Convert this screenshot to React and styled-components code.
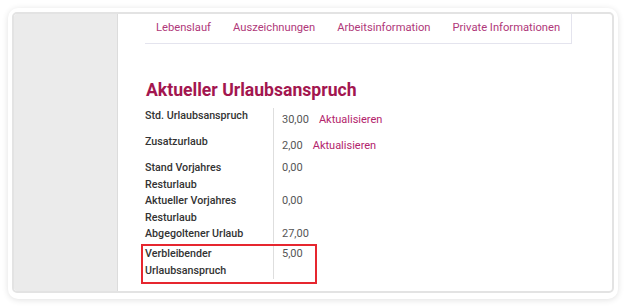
import styled, { createGlobalStyle } from "styled-components";

const GlobalStyle = createGlobalStyle`
  body {
    margin: 0;
    background: #ffffff;
    font-family: Roboto, "Liberation Sans", Arial, sans-serif;
  }
`;

const tabs = ["Lebenslauf", "Auszeichnungen", "Arbeitsinformation", "Private Informationen"];

const rows = [
  { label: "Std. Urlaubsanspruch", value: "30,00", action: true },
  { label: "Zusatzurlaub", value: "2,00", action: true },
  { label: "Stand Vorjahres Resturlaub", value: "0,00" },
  { label: "Aktueller Vorjahres Resturlaub", value: "0,00" },
  { label: "Abgegoltener Urlaub", value: "27,00" },
];

function App() {
  return (
    <>
      <GlobalStyle />
      <StPage>
        <StCard>
          <StFrame>
            {/* linke graue Spalte */}
            <StSidebar />

            <StContent>
              <StTabBar>
                {tabs.map((t) => (
                  <StTab key={t}>{t}</StTab>
                ))}
              </StTabBar>

              <StHeading>Aktueller Urlaubsanspruch</StHeading>

              <StTable>
                {rows.map((r) => (
                  <StRow key={r.label}>
                    <StLabel>{r.label}</StLabel>
                    <StValue $action={r.action}>
                      {r.value}
                      {r.action && <StLink type="button">Aktualisieren</StLink>}
                    </StValue>
                  </StRow>
                ))}

                {/* markierte Zeile */}
                <StHighlight>
                  <StRow>
                    <StLabel>Verbleibender Urlaubsanspruch</StLabel>
                    <StValue>5,00</StValue>
                  </StRow>
                </StHighlight>
              </StTable>
            </StContent>
          </StFrame>
        </StCard>
      </StPage>
    </>
  );
}

export default App;

const StPage = styled.div`
  padding: 8px;
`;

const StCard = styled.div`
  width: 610px;
  box-sizing: border-box;
  padding: 4px 4px 6px 4px;
  background: #fff;
  border-radius: 10px;
  box-shadow: 0 1px 6px rgba(0, 0, 0, 0.12);
`;

const StFrame = styled.div`
  display: flex;
  border: 2px solid #e3e3e3;
  border-radius: 5px;
  overflow: hidden;
  background: #fff;
`;

const StSidebar = styled.div`
  width: 103px;
  flex-shrink: 0;
  background: #ebebeb;
  border-right: 1px solid #dcdcdc;
`;

const StContent = styled.div`
  flex: 1;
  padding: 0 0 7px 27px;
`;

const StTabBar = styled.div`
  display: flex;
  width: 426px;
  height: 27px;
  padding-bottom: 2px;
  align-items: center;
  border-bottom: 1px solid #e4e4ee;
  border-right: 1px solid #e4e4ee;
`;

const StTab = styled.div`
  padding: 0 11px;
  font-size: 11.2px;
  color: #b0387a;
  white-space: nowrap;
`;

const StHeading = styled.h2`
  margin: 36px 0 8px 1px;
  font-size: 17.6px;
  line-height: 20px;
  font-weight: 700;
  color: #a3164f;
`;

const StTable = styled.div`
  display: flex;
  flex-direction: column;
`;

const StRow = styled.div`
  display: flex;
  font-size: 11px;
  line-height: 16.5px;
`;

const StLabel = styled.div`
  width: 128px;
  box-sizing: border-box;
  padding-right: 8px;
  font-size: 10.7px;
  font-weight: 500;
  color: #333;
`;

const StValue = styled.div`
  border-left: 1px solid #dedede;
  padding: ${(p) => (p.$action ? "4px 0 5.5px 8px" : "0 0 0 8px")};
  color: #555;
  white-space: nowrap;
`;

const StLink = styled.button`
  margin-left: 10px;
  padding: 0;
  border: none;
  background: none;
  font-family: inherit;
  font-size: 11px;
  line-height: 16.5px;
  color: #b3236b;
  cursor: pointer;
`;

const StHighlight = styled.div`
  width: 176px;
  box-sizing: border-box;
  margin: 1.5px 0 0 -4px;
  padding: 0 0 3px 2px;
  border: 2px solid #e6262f;
`;
